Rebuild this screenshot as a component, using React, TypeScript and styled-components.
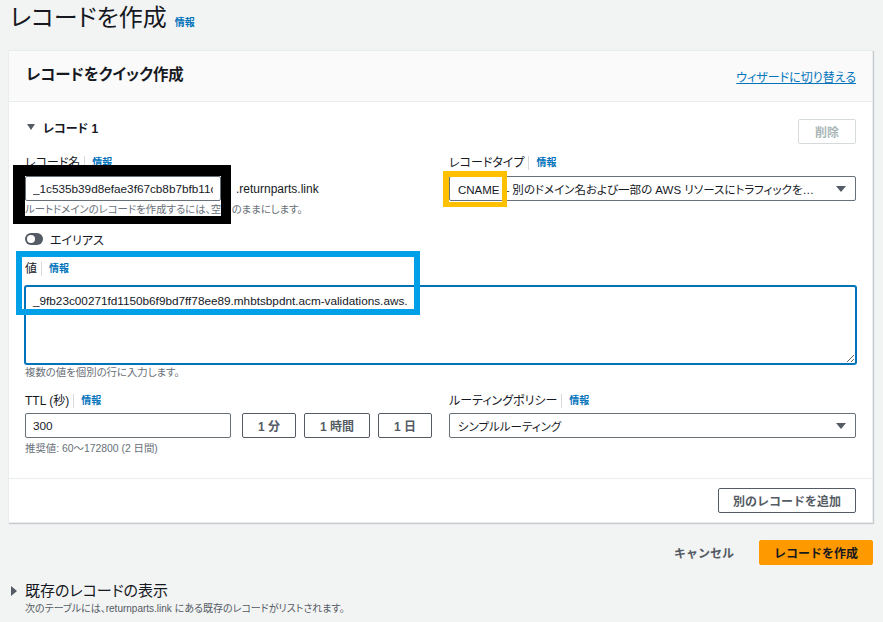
import styled, { createGlobalStyle, css } from "styled-components";

const GlobalStyle = createGlobalStyle`
  html, body {
    margin: 0;
    padding: 0;
    background: #f2f3f3;
  }
  body {
    font-family: "Liberation Sans", "Noto Sans CJK JP", sans-serif;
    font-size: 12px;
    color: #16191f;
    font-feature-settings: "palt";
  }
  * {
    box-sizing: border-box;
  }
`;

const Page = styled.div`
  position: relative;
  width: 883px;
  height: 622px;
  overflow: hidden;
  padding: 0 10px 0 8px;
`;

const TitleRow = styled.div`
  display: flex;
  align-items: baseline;
  gap: 8px;
  height: 36px;
  padding-left: 2px;
`;

const PageTitle = styled.h1`
  margin: 0;
  font-size: 24px;
  font-weight: 400;
  line-height: 36px;
  color: #16191f;
`;

const InfoLink = styled.a`
  font-size: 10px;
  font-weight: 700;
  color: #0073bb;
  text-decoration: none;
`;

const Card = styled.section`
  margin-top: 14px;
  background: #fff;
  border: 1px solid #eaeded;
  box-shadow: 1px 1px 1px rgba(0, 28, 36, 0.18);
`;

const CardHeader = styled.header`
  display: flex;
  align-items: center;
  justify-content: space-between;
  height: 51px;
  padding: 0 16px 0 17px;
  background: #fafafa;
  border-bottom: 1px solid #eaeded;
`;

const CardTitle = styled.h2`
  margin: -6px 0 0;
  font-size: 15.4px;
  font-weight: 700;
  color: #16191f;
`;

const SwitchLink = styled.a`
  margin-top: 1px;
  font-size: 12px;
  color: #0073bb;
  text-decoration: underline;
`;

const CardBody = styled.div`
  padding: 17px 16px 22px;
`;

const SectionHead = styled.div`
  display: flex;
  justify-content: space-between;
  height: 25px;
  padding-left: 2px;
`;

const Expander = styled.div`
  display: flex;
  align-items: center;
  gap: 8px;
  height: 16px;
  font-size: 12px;
  font-weight: 700;
`;

const CaretDown = styled.span`
  width: 0;
  height: 0;
  border-left: 4px solid transparent;
  border-right: 4px solid transparent;
  border-top: 6px solid #545b64;
`;

const Button = styled.button<{ $variant?: "normal" | "primary" | "disabled" | "link" }>`
  flex-shrink: 0;
  height: 25px;
  padding: 0 14px;
  border: 1px solid #545b64;
  border-radius: 2px;
  background: #fff;
  color: #545b64;
  font-family: inherit;
  font-size: 12px;
  font-weight: 700;
  white-space: nowrap;
  cursor: pointer;

  ${(p) =>
    p.$variant === "primary" &&
    css`
      background: #ff9900;
      border-color: #ff9900;
      color: #16191f;
    `}
  ${(p) =>
    p.$variant === "disabled" &&
    css`
      padding: 0 16px;
      border-color: #d5dbdb;
      color: #aab7b8;
      cursor: default;
    `}
  ${(p) =>
    p.$variant === "link" &&
    css`
      border-color: transparent;
      background: transparent;
      padding: 0;
    `}
`;

const FieldGrid = styled.div<{ $top: number }>`
  display: grid;
  grid-template-columns: 1fr 1fr;
  column-gap: 17px;
  margin-top: ${(p) => p.$top}px;
`;

const Field = styled.div`
  display: flex;
  flex-direction: column;
  min-width: 0;
`;

const Label = styled.div<{ $gap?: number }>`
  display: flex;
  align-items: center;
  height: 14px;
  margin-bottom: ${(p) => p.$gap ?? 6}px;
  font-size: 12px;
  line-height: 14px;
  color: #16191f;
`;

const LabelSep = styled.span`
  width: 1px;
  height: 14px;
  margin: 0 7px 0 4px;
  background: #d5dbdb;
`;

const inputBase = css`
  height: 25px;
  border: 1px solid #687078;
  border-radius: 2px;
  background: #fff;
  font-family: inherit;
  font-size: 11.75px;
  color: #16191f;
`;

const TextInput = styled.input<{ $width: number }>`
  ${inputBase};
  flex-shrink: 0;
  width: ${(p) => p.$width}px;
  padding: 0 7px;
  outline: none;
`;

const NameRow = styled.div`
  display: flex;
  align-items: center;
  gap: 15px;
`;

const Suffix = styled.span`
  font-size: 12px;
  color: #16191f;
`;

const Helper = styled.div<{ $top?: number }>`
  margin-top: ${(p) => p.$top ?? 2}px;
  font-size: 10.4px;
  line-height: 14px;
  color: #687078;
  white-space: nowrap;
`;

const SelectBox = styled.div`
  ${inputBase};
  display: flex;
  align-items: center;
  padding: 0 9px 0 8px;
  gap: 14px;
`;

const SelectText = styled.span`
  flex: 1;
  min-width: 0;
  font-size: 11.5px;
  overflow: hidden;
  white-space: nowrap;
  text-overflow: ellipsis;
`;

const SelectCaret = styled.span`
  width: 0;
  height: 0;
  border-left: 5px solid transparent;
  border-right: 5px solid transparent;
  border-top: 6px solid #545b64;
`;

const ToggleRow = styled.div`
  display: flex;
  align-items: center;
  gap: 7px;
  height: 16px;
  margin-top: 14px;
  font-size: 12px;
`;

const Toggle = styled.span`
  position: relative;
  width: 18px;
  height: 12px;
  border-radius: 6px;
  background: #545b64;

  &::after {
    content: "";
    position: absolute;
    left: 2px;
    top: 2px;
    width: 8px;
    height: 8px;
    border-radius: 50%;
    background: #fff;
  }
`;

const ValueLabel = styled(Label)`
  margin-top: 15px;
`;

const ValueArea = styled.textarea`
  display: block;
  width: 100%;
  height: 78px;
  padding: 6px 7px;
  border: 1px solid #0073bb;
  border-radius: 2px;
  box-shadow: 0 0 0 1px #0073bb;
  font-family: inherit;
  font-size: 11.75px;
  line-height: 16px;
  color: #16191f;
  outline: none;
  resize: vertical;
`;

const TtlRow = styled.div`
  display: flex;
  align-items: center;
  gap: 8px;
`;

const TtlInput = styled(TextInput)`
  margin-right: 3px;
`;

const TtlButton = styled(Button)`
  padding: 0 15px;
`;

const CardFooter = styled.footer`
  display: flex;
  justify-content: flex-end;
  padding: 9px 16px;
  border-top: 1px solid #eaeded;
`;

const Actions = styled.div`
  display: flex;
  justify-content: flex-end;
  align-items: center;
  gap: 24px;
  margin-top: 17px;
`;

const Existing = styled.div`
  margin-top: 16px;
  padding-left: 3px;
`;

const ExistingTitle = styled.div`
  display: flex;
  align-items: center;
  gap: 8px;
  font-size: 15px;
  line-height: 20px;
  color: #16191f;
`;

const CaretRight = styled.span`
  width: 0;
  height: 0;
  border-top: 5px solid transparent;
  border-bottom: 5px solid transparent;
  border-left: 6px solid #545b64;
`;

const ExistingSub = styled.div`
  margin-top: 1px;
  padding-left: 14px;
  font-size: 10px;
  line-height: 14px;
  color: #545b64;
`;

/* hand-drawn highlight frames laid over the form */
const Mark = styled.div`
  position: absolute;
  border-style: solid;
  pointer-events: none;
`;

const BlackMark = styled(Mark)`
  left: 13px;
  top: 165px;
  width: 218px;
  height: 59px;
  border-color: #000;
  border-width: 11px 10px 8px 12px;
`;

const YellowMark = styled(Mark)`
  left: 443px;
  top: 171px;
  width: 64px;
  height: 36px;
  border-color: #ffc000;
  border-width: 6px 5px 5px 6px;
`;

const BlueMark = styled(Mark)`
  left: 16px;
  top: 251px;
  width: 404px;
  height: 64px;
  border-color: #00a0e9;
  border-width: 6px;
`;

function FieldLabel({ text, gap }: { text: string; gap?: number }) {
  return (
    <Label $gap={gap}>
      {text}
      <LabelSep />
      <InfoLink>情報</InfoLink>
    </Label>
  );
}

export default function App() {
  return (
    <Page>
      <GlobalStyle />
      <TitleRow>
        <PageTitle>レコードを作成</PageTitle>
        <InfoLink>情報</InfoLink>
      </TitleRow>

      <Card>
        <CardHeader>
          <CardTitle>レコードをクイック作成</CardTitle>
          <SwitchLink>ウィザードに切り替える</SwitchLink>
        </CardHeader>

        <CardBody>
          <SectionHead>
            <Expander>
              <CaretDown />
              レコード 1
            </Expander>
            <Button $variant="disabled">削除</Button>
          </SectionHead>

          <FieldGrid $top={12}>
            <Field>
              <FieldLabel text="レコード名" />
              <NameRow>
                <TextInput $width={196} defaultValue="_1c535b39d8efae3f67cb8b7bfb11c6" />
                <Suffix>.returnparts.link</Suffix>
              </NameRow>
              <Helper>ルートドメインのレコードを作成するには、空白のままにします。</Helper>
            </Field>
            <Field>
              <FieldLabel text="レコードタイプ" />
              <SelectBox>
                <SelectText>
                  CNAME – 別のドメイン名および一部の AWS リソースにトラフィックをルーティングします
                </SelectText>
                <SelectCaret />
              </SelectBox>
            </Field>
          </FieldGrid>

          <ToggleRow>
            <Toggle />
            エイリアス
          </ToggleRow>

          <ValueLabel $gap={10}>
            値
            <LabelSep />
            <InfoLink>情報</InfoLink>
          </ValueLabel>
          <ValueArea defaultValue="_9fb23c00271fd1150b6f9bd7ff78ee89.mhbtsbpdnt.acm-validations.aws." />
          <Helper>複数の値を個別の行に入力します。</Helper>

          <FieldGrid $top={14}>
            <Field>
              <FieldLabel text="TTL (秒)" gap={5} />
              <TtlRow>
                <TtlInput $width={206} defaultValue="300" />
                <TtlButton>1 分</TtlButton>
                <TtlButton>1 時間</TtlButton>
                <TtlButton>1 日</TtlButton>
              </TtlRow>
              <Helper $top={4}>推奨値: 60～172800 (2 日間)</Helper>
            </Field>
            <Field>
              <FieldLabel text="ルーティングポリシー" gap={5} />
              <SelectBox>
                <SelectText>シンプルルーティング</SelectText>
                <SelectCaret />
              </SelectBox>
            </Field>
          </FieldGrid>
        </CardBody>

        <CardFooter>
          <Button>別のレコードを追加</Button>
        </CardFooter>
      </Card>

      <Actions>
        <Button $variant="link">キャンセル</Button>
        <Button $variant="primary">レコードを作成</Button>
      </Actions>

      <Existing>
        <ExistingTitle>
          <CaretRight />
          既存のレコードの表示
        </ExistingTitle>
        <ExistingSub>次のテーブルには、returnparts.link にある既存のレコードがリストされます。</ExistingSub>
      </Existing>

      <BlackMark />
      <YellowMark />
      <BlueMark />
    </Page>
  );
}
